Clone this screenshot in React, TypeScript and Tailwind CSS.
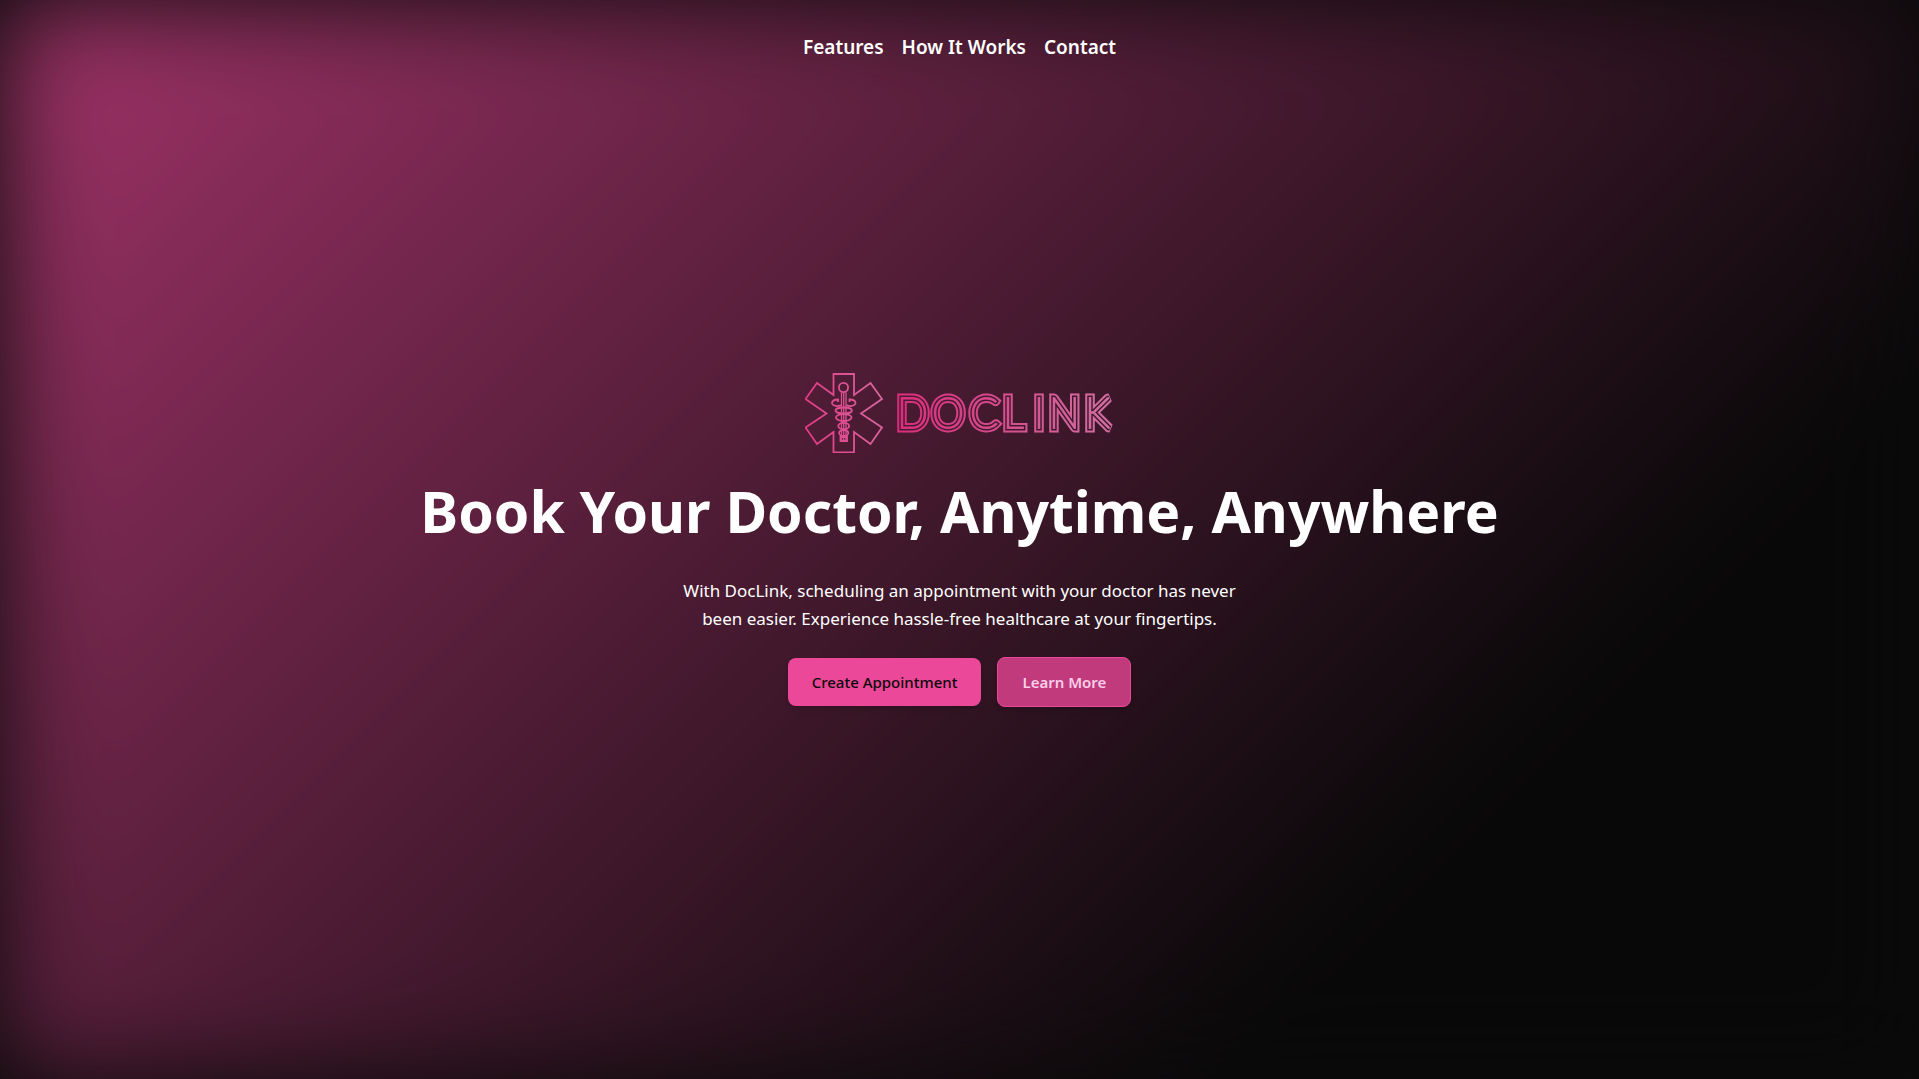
const NAV_LINKS = [
  { label: 'Features', href: '#features' },
  { label: 'How It Works', href: '#how-it-works' },
  { label: 'Contact', href: '#contact' },
];

const LETTER_X = '897 932 970 1003 1034 1049 1085';

function LogoText(props: { stroke: string; strokeWidth: number }) {
  return (
    <text
      x={LETTER_X}
      y="428"
      fontFamily="Lato, sans-serif"
      fontWeight="100"
      fontSize="41"
      fill={props.stroke}
      strokeMiterlimit="2"
      stroke={props.stroke}
      strokeWidth={props.strokeWidth}
    >
      DOCLINK
    </text>
  );
}

function Logo() {
  return (
    <svg viewBox="805 373 310 80" className="h-20 w-[310px]" role="img" aria-label="DocLink">
      <defs>
        <linearGradient id="emblem" gradientUnits="userSpaceOnUse" x1="805" y1="410" x2="885" y2="400">
          <stop offset="0" stopColor="#e23a85" />
          <stop offset="1" stopColor="#d868a0" />
        </linearGradient>
        <linearGradient id="wordmark" gradientUnits="userSpaceOnUse" x1="898" y1="0" x2="1115" y2="0">
          <stop offset="0" stopColor="#d92d7c" />
          <stop offset="1" stopColor="#d070a2" />
        </linearGradient>
        <mask id="inline" maskUnits="userSpaceOnUse" x="890" y="385" width="230" height="60">
          <LogoText stroke="white" strokeWidth={9} />
          <LogoText stroke="black" strokeWidth={5} />
          <LogoText stroke="white" strokeWidth={2} />
        </mask>
      </defs>
      <g fill="none" stroke="url(#emblem)" strokeWidth="1.8">
        <path d="M833.5 374h20.500v21l16.500-12 11.500 16-21 14.500 21 14-11.500 16.500-16.500-12v20.500h-20.500v-20.500l-16.500 12-11.500-16.500 21-14-21-14.500 11.500-16 16.500 12z" />
        <circle cx="843.500" cy="387.500" r="4.600" />
        <path d="M841.500 392.500v48h4.500v-48M843.700 393v47" strokeWidth="1.300" />
        <path d="M841 405c-3 2-8 1-9-1.500-.5-3 3-4 6-4v2.500M846.500 405c3 2 8 1 9-1.500.5-3-3-4-6-4v2.500" />
        <ellipse cx="843.700" cy="410.500" rx="8.200" ry="3" />
        <ellipse cx="843.700" cy="417.500" rx="7.800" ry="3.500" />
        <ellipse cx="843.700" cy="426" rx="5.400" ry="3.200" />
        <ellipse cx="843.700" cy="433" rx="4.600" ry="3" />
        <path d="M840.500 437h6.500v4h-6.500z" />
      </g>
      <rect x="890" y="385" width="230" height="60" fill="url(#wordmark)" mask="url(#inline)" />
    </svg>
  );
}

export default function App() {
  return (
    <div className="relative isolate flex min-h-screen flex-col overflow-hidden bg-[#0a0a0a] font-['Noto_Sans',sans-serif] text-white">
      <div
        aria-hidden="true"
        className="absolute inset-0 -z-10 bg-[linear-gradient(135deg,#ec4899_0%,#080808_76%)] opacity-67 blur-[52px]"
      />
      <header className="flex h-24 items-center justify-center pb-0.5">
        <nav aria-label="Main" className="flex gap-[18px] text-[19px] leading-7 font-semibold">
          {NAV_LINKS.map((link) => (
            <a key={link.href} href={link.href}>
              {link.label}
            </a>
          ))}
        </nav>
      </header>
      <main className="flex flex-1 flex-col items-center justify-center px-6 pb-24 text-center">
        <Logo />
        <h1 className="mt-7 text-[57px] leading-[60px] font-bold">Book Your Doctor, Anytime, Anywhere</h1>
        <p className="mt-9 max-w-xl text-[17px] leading-7">
          With DocLink, scheduling an appointment with your doctor has never been easier. Experience hassle-free
          healthcare at your fingertips.
        </p>
        <div className="mt-6 flex flex-wrap items-center justify-center gap-4 text-[15px] leading-6">
          <button type="button" className="rounded-lg bg-[#ec4899] px-6 py-3 font-medium text-[#0a0a0a] shadow-md">
            Create Appointment
          </button>
          <button
            type="button"
            className="rounded-lg border border-[#ec4899] bg-[#c03a7c] px-6 py-3 font-semibold text-pink-200 shadow-md"
          >
            Learn More
          </button>
        </div>
      </main>
    </div>
  );
}
